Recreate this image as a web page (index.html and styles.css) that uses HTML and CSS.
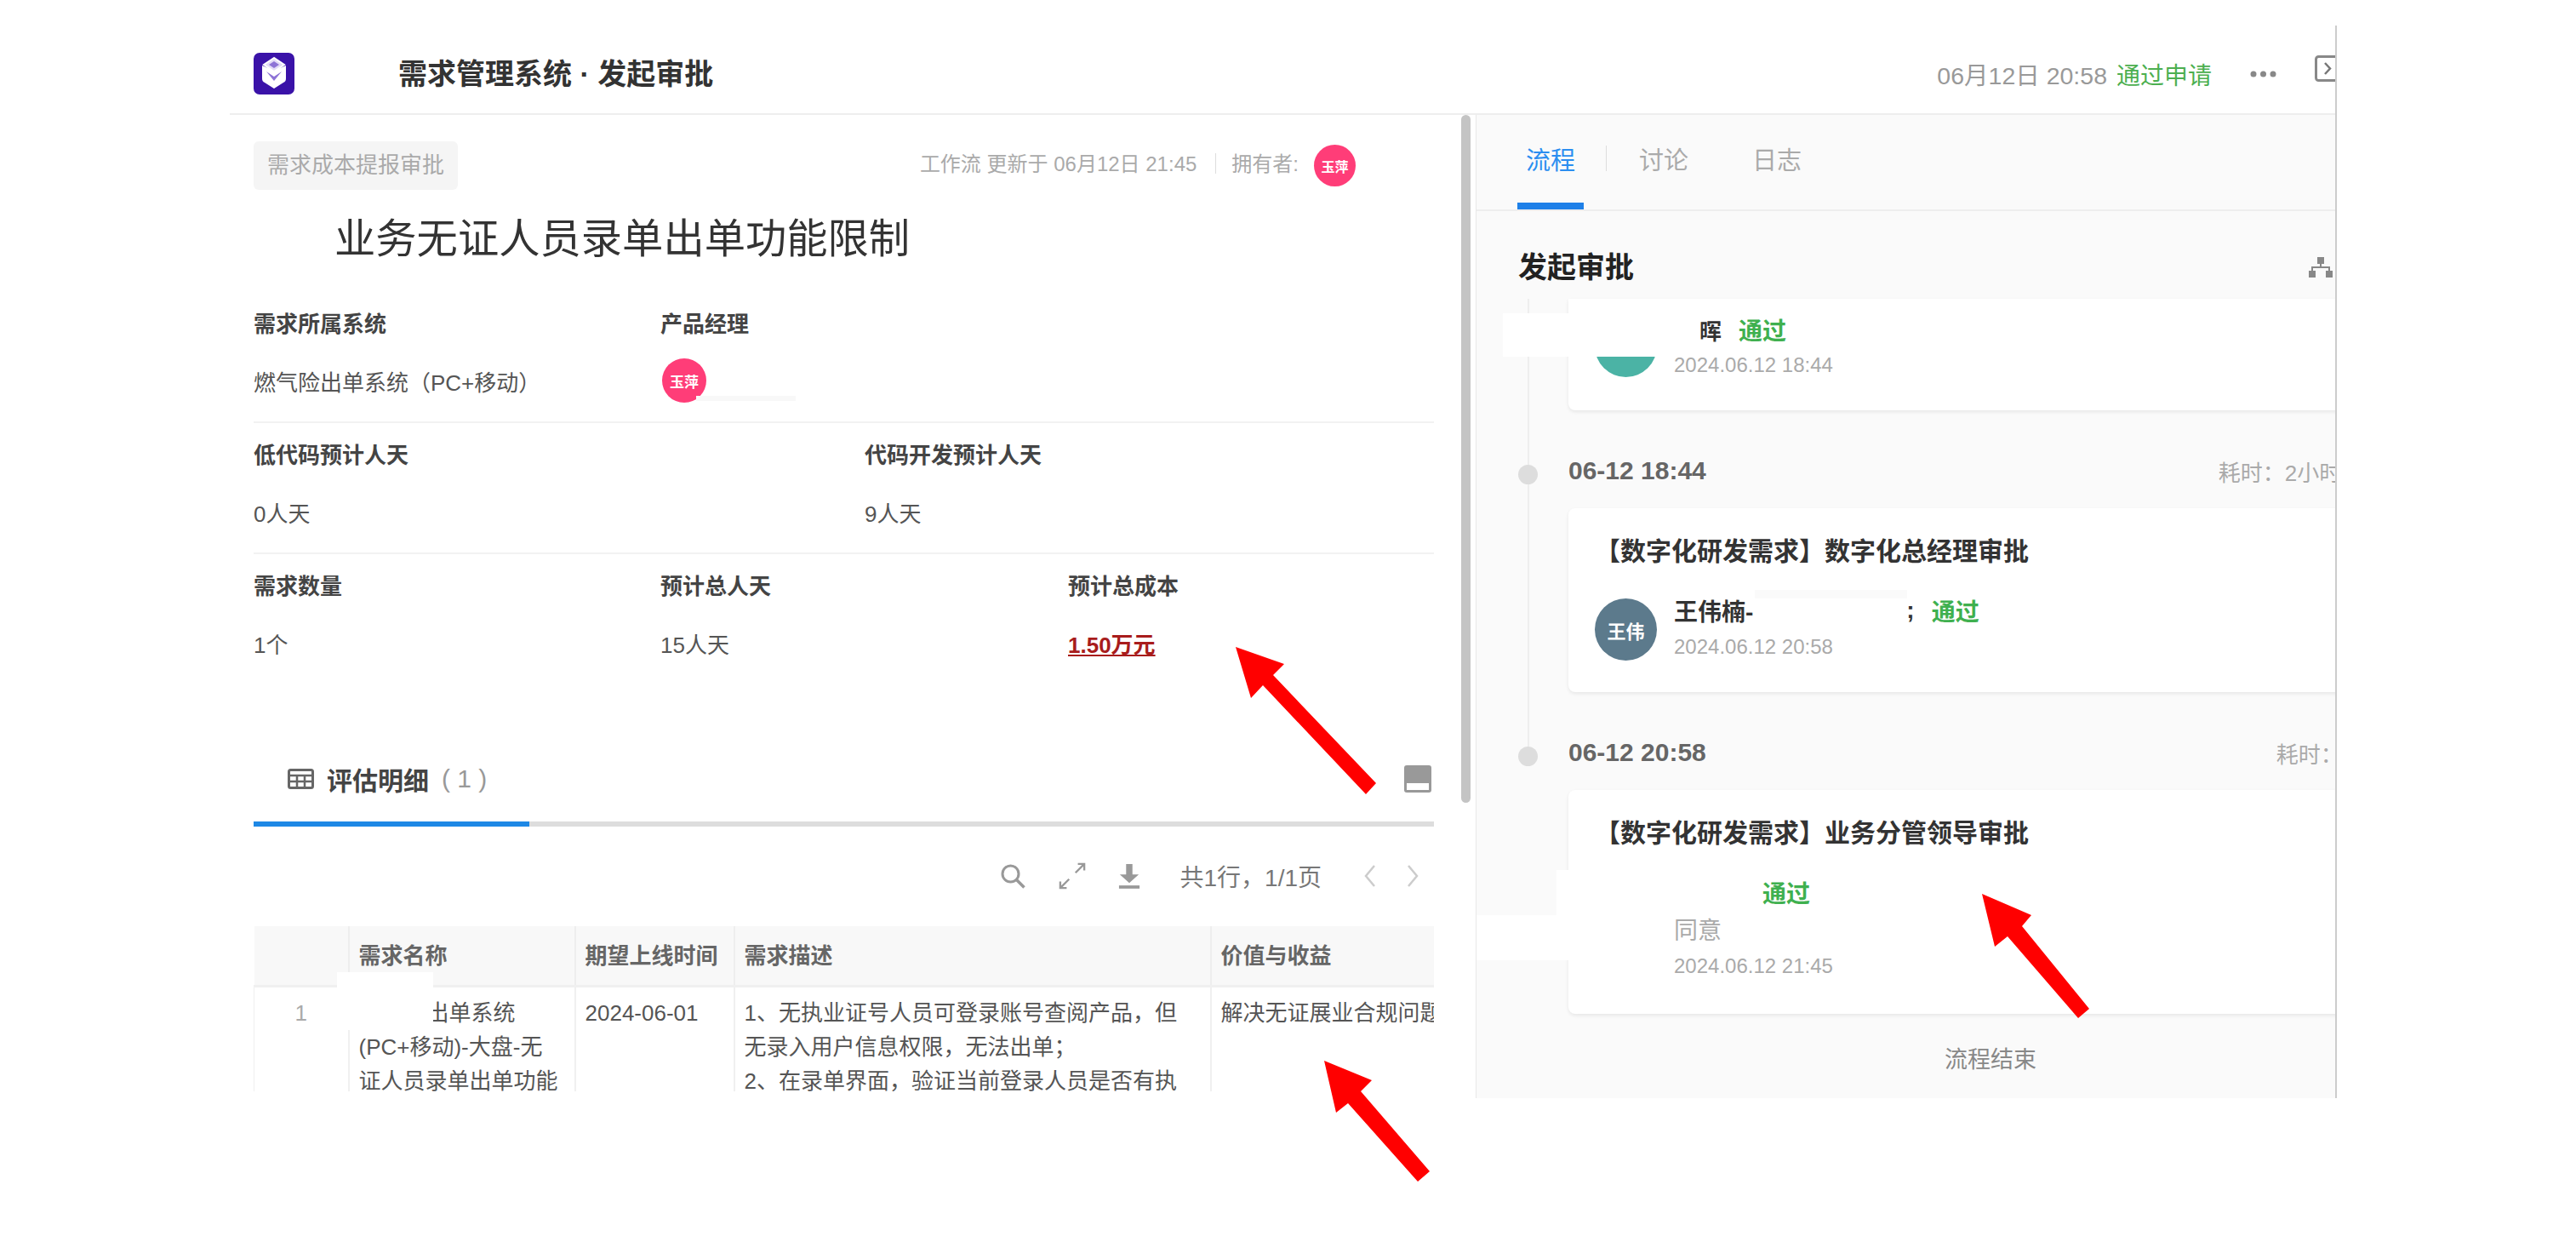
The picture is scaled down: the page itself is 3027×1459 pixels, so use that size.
FILE: index.html
```html
<!DOCTYPE html>
<html lang="zh-CN">
<head>
<meta charset="utf-8">
<title>需求管理系统 · 发起审批</title>
<link rel="stylesheet" href="styles.css">
</head>
<body>
<div class="page">
  <div class="frame">
    <header class="topbar">
      <svg class="logo" viewBox="0 0 48 49"><rect width="48" height="49" rx="7" fill="#3a12a8"/><path d="M24 21 10 15v15c0 3 1 4 3 5l11 7 11-7c2-1 3-2 3-5V15z" fill="#fff"/><path d="M24 6 12 14l12 8 12-8z" fill="#e4dcf7" stroke="#fff" stroke-width="2"/><path d="m24 10-6 4 6 4 6-4zM15 22l9 6 9-6-9 11z" fill="#8d73d6"/></svg>
      <h1 class="app-title">需求管理系统 · 发起审批</h1>
      <span class="top-time">06月12日 20:58</span>
      <span class="top-status">通过申请</span>
      <svg class="top-dots" viewBox="0 0 31 8"><circle cx="4" cy="4" r="3.5"/><circle cx="15.5" cy="4" r="3.5"/><circle cx="27" cy="4" r="3.5"/></svg>
      <svg class="top-panel" viewBox="0 0 31 31"><rect x="1.5" y="1.5" width="28" height="28" rx="3" fill="none" stroke="#888" stroke-width="3"/><path d="m12 9 6 6.500-6 6.500" fill="none" stroke="#777" stroke-width="2.500"/></svg>
    </header>

    <div class="workspace">
      <section class="left">
        <div class="left-body">
          <div class="meta-row">
            <span class="tag">需求成本提报审批</span>
            <div class="meta">
              <span class="meta-text">工作流 更新于 06月12日 21:45</span>
              <i class="meta-sep"></i>
              <span class="meta-text">拥有者:</span>
              <span class="badge badge-sm">玉萍</span>
            </div>
          </div>
          <h2 class="doc-title">业务无证人员录单出单功能限制</h2>

          <div class="fields fields-3 ruled">
            <div><div class="f-label">需求所属系统</div><div class="f-value">燃气险出单系统（PC+移动）</div></div>
            <div><div class="f-label">产品经理</div><div class="f-value f-pm"><span class="badge badge-md">玉萍</span><i class="pm-stripe"></i></div></div>
          </div>
          <div class="fields fields-2 ruled">
            <div><div class="f-label">低代码预计人天</div><div class="f-value">0人天</div></div>
            <div><div class="f-label">代码开发预计人天</div><div class="f-value">9人天</div></div>
          </div>
          <div class="fields fields-3">
            <div><div class="f-label">需求数量</div><div class="f-value">1个</div></div>
            <div><div class="f-label">预计总人天</div><div class="f-value">15人天</div></div>
            <div><div class="f-label">预计总成本</div><div class="f-value f-cost">1.50万元</div></div>
          </div>

          <div class="sub-head">
            <svg class="sub-icon" viewBox="0 0 31 24"><rect x="1.500" y="1.500" width="28" height="21" rx="2" fill="none" stroke="#666" stroke-width="3"/><path d="M1.500 8h28M11 8v15M20 8v15M1.500 15h28" stroke="#666" stroke-width="2.500"/></svg>
            <span class="sub-title">评估明细</span>
            <span class="sub-count">( 1 )</span>
            <svg class="sub-toggle" viewBox="0 0 32 32"><rect width="32" height="32" rx="3" fill="#999"/><rect x="3" y="21" width="26" height="8" fill="#fff"/></svg>
          </div>
          <div class="sub-bar"><div class="sub-bar-fill"></div></div>

          <div class="toolbar">
            <svg class="tool tool-search" viewBox="0 0 30 30"><circle cx="12.500" cy="12.500" r="9.500" fill="none" stroke="#999" stroke-width="3"/><path d="m19.500 19.500 9 9" stroke="#999" stroke-width="3.500"/></svg>
            <svg class="tool tool-expand" viewBox="0 0 34 34"><path d="M24 2h8v8M32 2 21 13M10 32H2v-8M2 32l11-11" fill="none" stroke="#999" stroke-width="2.500"/></svg>
            <svg class="tool tool-down" viewBox="0 0 28 32"><path d="M10 1h8v13h8L14 25 2 14h8z" fill="#999"/><rect x="1" y="28" width="26" height="4" fill="#999"/></svg>
            <span class="pager">共1行，1/1页</span>
            <svg class="chev" viewBox="0 0 14 28"><path d="M12 2 2 14l10 12" fill="none" stroke="#ccc" stroke-width="2.500"/></svg>
            <svg class="chev chev-next" viewBox="0 0 14 28"><path d="m2 2 10 12L2 26" fill="none" stroke="#ccc" stroke-width="2.500"/></svg>
          </div>

          <div class="table-wrap">
            <table class="grid">
              <colgroup><col class="c-no"><col class="c-name"><col class="c-date"><col class="c-desc"><col class="c-value"></colgroup>
              <thead>
                <tr><th></th><th>需求名称</th><th>期望上线时间</th><th>需求描述</th><th>价值与收益</th></tr>
              </thead>
              <tbody>
                <tr>
                  <td class="cell-no">1</td>
                  <td><span class="name-first">出单系统</span><br>(PC+移动)-大盘-无<br>证人员录单出单功能<br>限制</td>
                  <td>2024-06-01</td>
                  <td class="cell-desc">1、无执业证号人员可登录账号查阅产品，但无录入用户信息权限，无法出单；<br>2、在录单界面，验证当前登录人员是否有执业证号</td>
                  <td class="cell-clip">解决无证展业合规问题</td>
                </tr>
              </tbody>
            </table>
            <div class="mask mask-cell"></div>
          </div>
        </div>
        <div class="scrollbar"></div>
      </section>

      <aside class="right">
        <nav class="tabs">
          <span class="tab tab-on">流程</span>
          <span class="tab">讨论</span>
          <span class="tab">日志</span>
        </nav>
        <div class="flow-head">
          <span class="flow-title">发起审批</span>
          <svg class="flow-org" viewBox="0 0 30 24"><rect x="11" y="0" width="8" height="8" fill="#888"/><rect x="1" y="16" width="8" height="8" fill="#888"/><rect x="21" y="16" width="8" height="8" fill="#888"/><path d="M15 8v4M5 16v-4h20v4" fill="none" stroke="#888" stroke-width="2"/></svg>
        </div>
        <div class="timeline">
          <article class="card card-a">
            <div class="person">
              <span class="avatar avatar-teal"></span>
              <div>
                <div class="p-name"><span class="name-tail">晖</span><span class="pass">通过</span></div>
                <div class="p-date">2024.06.12 18:44</div>
              </div>
            </div>
          </article>

          <div class="time-row"><span class="time">06-12 18:44</span><span class="dur dur-long">耗时：2小时14分钟</span></div>
          <article class="card card-b">
            <h3 class="card-title">【数字化研发需求】数字化总经理审批</h3>
            <div class="person">
              <span class="avatar avatar-slate">王伟</span>
              <div class="person-text">
                <div class="p-name">王伟楠-<span class="name-gap">;</span><span class="pass">通过</span></div>
                <div class="p-date">2024.06.12 20:58</div>
              </div>
            </div>
          </article>

          <div class="time-row"><span class="time">06-12 20:58</span><span class="dur dur-short">耗时：47分钟</span></div>
          <article class="card card-c">
            <h3 class="card-title">【数字化研发需求】业务分管领导审批</h3>
            <div class="person person-noavatar">
              <div class="person-text">
                <div class="p-name"><span class="pass pass-solo">通过</span></div>
                <div class="p-note">同意</div>
                <div class="p-date p-date-c">2024.06.12 21:45</div>
              </div>
            </div>
          </article>
          <div class="flow-end">流程结束</div>
        </div>
        <div class="mask mask-r1"></div>
        <div class="mask mask-r2"></div>
        <div class="mask mask-r3"></div>
        <div class="mask mask-r4"></div>
      </aside>
    </div>
  </div>

  <svg class="arrows" viewBox="0 0 3027 1459">
    <polygon points="1452,760 1509,780 1496,793 1617,920 1605,933 1484,805 1470,820"/>
    <polygon points="1556,1246 1612,1269 1599,1282 1680,1376 1666,1388 1584,1296 1570,1307"/>
    <polygon points="2329,1050 2387,1075 2376,1088 2455,1185 2442,1196 2359,1100 2344,1112"/>
  </svg>
</div>
</body>
</html>
```
FILE: styles.css
```css
* { box-sizing: border-box; }
html, body { margin: 0; padding: 0; background: #fff; }
body {
  font-family: "Liberation Sans", "Noto Sans CJK SC", sans-serif;
  color: #333;
}
h1, h2, h3 { margin: 0; font-weight: 700; }

.page { position: relative; width: 3027px; height: 1459px; overflow: hidden; padding: 30px 0 0 270px; }
.frame {
  width: 2476px;
  height: 1260px;
  border-right: 2px solid #ccc;
  overflow: hidden;
  display: flex;
  flex-direction: column;
}

/* top bar */
.topbar {
  flex: 0 0 105px;
  display: flex;
  align-items: center;
  padding: 10px 0 0 28px;
  border-bottom: 2px solid #eee;
}
.logo { width: 48px; height: 49px; flex: none; }
.app-title { margin-left: 122px; font-size: 34px; line-height: 44px; color: #333; }
.top-time { margin-left: auto; font-size: 28.5px; color: #999; }
.top-status { margin-left: 11px; font-size: 28px; color: #4caf50; }
.top-dots { margin-left: 45px; width: 31px; height: 8px; fill: #888; flex: none; }
.top-panel { margin: 0 -7px 12px 45px; width: 31px; height: 31px; flex: none; }

.workspace { flex: 1; display: flex; min-height: 0; }

/* left panel */
.left { flex: 0 0 1464px; display: flex; align-items: flex-start; }
.left-body { flex: 0 0 1415px; padding: 31px 0 0 28px; height: 1147px; overflow: hidden; }
.scrollbar { flex: none; width: 11px; height: 808px; margin-left: 32px; border-radius: 6px; background: #c4c4c4; }

.meta-row { display: flex; align-items: center; height: 57px; }
.tag { height: 57px; padding: 0 16px; line-height: 57px; font-size: 26px; color: #aaa; background: #f5f5f5; border-radius: 6px; }
.meta { margin-left: auto; margin-right: 92px; display: flex; align-items: center; font-size: 24px; color: #aaa; }
.meta-text { padding-bottom: 8px; }
.meta-sep { width: 1px; height: 24px; margin: 0 18px 6px 22px; background: #ddd; }
.badge {
  display: inline-flex; align-items: center; justify-content: center;
  border-radius: 50%; background: #ff3d78; color: #fff; font-weight: 700;
}
.badge-sm { width: 49px; height: 49px; margin-left: 18px; font-size: 16px; }
.badge-md { flex: none; width: 52px; height: 52px; margin-left: 2px; font-size: 17px; }

.doc-title { margin: 27px 0 33px; padding-left: 95px; font-size: 48.3px; line-height: 60px; font-weight: 400; color: #333; }

.fields { display: grid; height: 154px; padding-top: 20px; }
.fields.ruled { border-bottom: 2px solid #f2f2f2; }
.fields-3 { grid-template-columns: 478px 479px 1fr; }
.fields-2 { grid-template-columns: 718px 1fr; }
.f-label { height: 36px; line-height: 36px; font-size: 26px; font-weight: 700; color: #444; }
.f-value { display: flex; align-items: center; height: 36px; margin-top: 30px; font-size: 26px; color: #555; }
.f-cost { color: #a81c1c; font-weight: 700; text-decoration: underline; }
.f-pm { position: relative; }
.pm-stripe { position: absolute; left: 42px; top: 36px; width: 117px; height: 6px; background: #f8f8f8; }

.sub-head { display: flex; align-items: center; height: 40px; margin-top: 90px; padding-left: 40px; }
.sub-icon { width: 31px; height: 24px; flex: none; }
.sub-title { margin-left: 15px; font-size: 30px; font-weight: 700; color: #444; }
.sub-count { margin-left: 15px; font-size: 30px; color: #999; }
.sub-toggle { width: 32px; height: 32px; margin-left: auto; margin-right: 3px; }
.sub-bar { height: 6px; margin-top: 30px; background: #ddd; }
.sub-bar-fill { width: 324px; height: 100%; background: #1e88e5; }

.toolbar { display: flex; align-items: center; justify-content: flex-end; height: 40px; margin-top: 38px; }
.tool { flex: none; }
.tool-search { width: 30px; height: 30px; }
.tool-expand { width: 32px; height: 32px; margin-left: 39px; }
.tool-down { width: 26px; height: 30px; margin-left: 38px; }
.pager { margin-left: 47px; font-size: 28px; color: #777; white-space: nowrap; }
.chev { width: 14px; height: 28px; margin-left: 50px; flex: none; }
.chev-next { margin-left: 36px; margin-right: 18px; }

.table-wrap { position: relative; height: 194px; margin-top: 39px; overflow: hidden; }
.grid { width: 1387px; table-layout: fixed; border-collapse: collapse; font-size: 26px; }
.c-no { width: 111px; }
.c-name { width: 266px; }
.c-date { width: 187px; }
.c-desc { width: 560px; }
.c-value { width: 263px; }
.grid th {
  height: 70px; padding: 0 11px 3px; text-align: left; font-weight: 700; color: #666;
  background: #f8f8f8; border-left: 2px solid #eee; border-bottom: 3px solid #f0f0f0; white-space: nowrap;
}
.grid th:first-child { border-left: 0; }
.grid td {
  padding: 10px 11px; vertical-align: top; line-height: 40px; color: #555;
  border-left: 2px solid #f0f0f0;
}
.grid td:first-child { border-left: 1px solid #f0f0f0; }
.grid .cell-no { text-align: center; color: #aaa; }
.grid .cell-desc { padding-right: 26px; }
.name-first { display: inline-block; margin-left: 80px; }
.cell-clip { white-space: nowrap; overflow: hidden; }

.mask { position: absolute; background: #fff; }
.mask-cell { left: 98px; top: 54px; width: 113px; height: 68px; }

/* right panel */
.right { position: relative; flex: 1; min-width: 0; overflow: hidden; background: #fafafa; border-left: 1px solid #e8e8e8; }
.tabs { display: flex; gap: 55px; height: 113px; padding-left: 48px; border-bottom: 2px solid #eee; }
.tab {
  position: relative; height: 111px; padding: 34px 10px 0; line-height: 40px;
  font-size: 29px; color: #aaa; border-bottom: 8px solid transparent;
}
.tab-on { color: #2b8ef0; border-bottom-color: #1e80e8; }
.tab-on::after { content: ""; position: absolute; right: -27px; top: 36px; width: 1px; height: 30px; background: #ddd; }

.flow-head { display: flex; align-items: center; justify-content: space-between; height: 40px; margin-top: 43px; padding-left: 49px; }
.flow-title { font-size: 34px; font-weight: 700; color: #222; }
.flow-org { width: 30px; height: 24px; flex: none; margin: 6px 2px 0 0; }

.timeline { position: relative; margin-top: 20px; padding-left: 108px; }
.timeline::before { content: ""; position: absolute; left: 60px; top: 0; width: 2px; height: 538px; background: #eee; }

.card { position: relative; width: 1100px; background: #fff; border-radius: 0 0 8px 8px; box-shadow: 0 2px 4px rgba(0,0,0,.08); padding-left: 31px; }
.card-a { height: 131px; padding-top: 19px; }
.card-b { height: 216px; margin-top: 24px; padding-top: 31px; border-radius: 8px; }
.card-c { height: 263px; margin-top: 24px; padding-top: 31px; border-radius: 8px; }
.card-title { height: 40px; line-height: 40px; font-size: 30px; color: #333; }
.card-title + .person { margin-top: 35px; }

.person { display: flex; gap: 20px; }
.person-text { margin-top: -3px; }
.card-a .person-text { margin-top: 0; }
.avatar {
  flex: none; display: flex; align-items: center; justify-content: center;
  width: 73px; height: 73px; border-radius: 50%; color: #fff; font-size: 22px; font-weight: 700;
}
.avatar-teal { background: #4bb3a5; }
.avatar-slate { background: #5c7a8c; }
.person-noavatar { padding-left: 93px; }
.p-name { display: flex; align-items: center; height: 34px; font-size: 28px; font-weight: 700; color: #333; }
.name-tail { margin-left: 30px; font-size: 26px; }
.name-gap { margin-left: 180px; }
.pass { margin-left: 20px; font-size: 28px; font-weight: 700; color: #3fb04f; }
.pass-solo { margin-left: 104px; }
.p-date { height: 30px; line-height: 30px; margin-top: 11px; font-size: 24px; color: #aaa; }
.card-a .p-date { margin-top: 10px; }
.p-note { height: 34px; line-height: 34px; margin-top: 12px; font-size: 28px; color: #aaa; }
.p-date-c { margin-top: 9px; }

.time-row { position: relative; display: flex; align-items: center; height: 40px; margin-top: 51px; white-space: nowrap; }
.time-row::before { content: ""; position: absolute; left: -59px; top: 13px; width: 23px; height: 23px; border-radius: 50%; background: #ddd; }
.time { font-size: 30px; font-weight: 700; color: #666; }
.dur { font-size: 26px; color: #aaa; }
.dur-long { margin-left: 602px; }
.dur-short { margin-left: 670px; }

.flow-end { width: 902px; height: 40px; margin-top: 34px; padding-left: 442px; line-height: 40px; font-size: 27px; color: #888; }

.mask-r1 { left: 31px; top: 233px; width: 224px; height: 51px; }
.mask-r2 { left: 94px; top: 887px; width: 136px; height: 106px; }
.mask-r3 { left: 0; top: 940px; width: 230px; height: 53px; }
.mask-r4 { left: 327px; top: 558px; width: 179px; height: 10px; background: #fafafa; }

.arrows { position: absolute; left: 0; top: 0; width: 3027px; height: 1459px; fill: #f00; pointer-events: none; }
```
